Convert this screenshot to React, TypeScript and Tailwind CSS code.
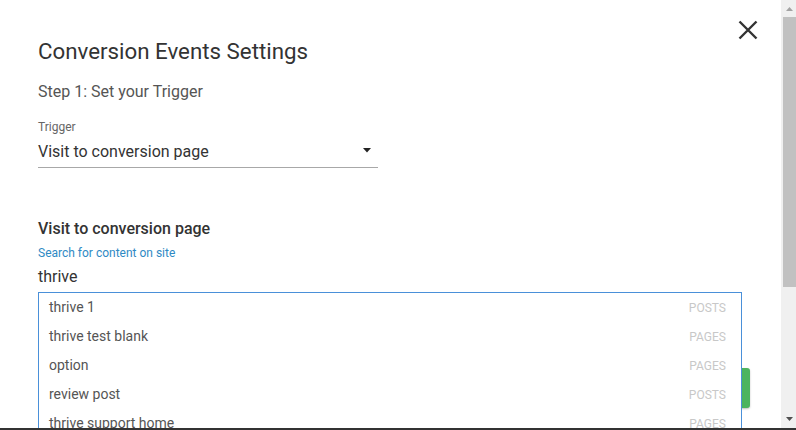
import React from "react";

const items: { name: string; type: string }[] = [
  { name: "thrive 1", type: "POSTS" },
  { name: "thrive test blank", type: "PAGES" },
  { name: "option", type: "PAGES" },
  { name: "review post", type: "POSTS" },
  { name: "thrive support home", type: "PAGES" },
];

export default function App() {
  return (
    <div
      className="w-[796px] h-[430px] overflow-hidden bg-white flex flex-col"
      style={{ fontFamily: "Roboto, 'Noto Sans', sans-serif" }}
    >
      <div className="flex flex-1 min-h-0">
        <div className="relative flex-1 min-w-0 overflow-hidden bg-white">
          <button className="absolute left-[738px] top-[20px] w-[20px] h-[20px] text-[#333]">
            <svg width="20" height="20" viewBox="0 0 20 20">
              <path d="M1.5 1.5 L18.5 18.5 M18.5 1.5 L1.5 18.5" stroke="#333" strokeWidth="2.4" />
            </svg>
          </button>
          <div className="absolute left-[741px] top-[368px] w-[9px] h-[40px] rounded-r-[3px] bg-[#4cb45f] shadow-[0_1px_2px_rgba(0,0,0,0.25)]" />
          <div className="relative px-[38px] pt-[38px]">
            <div className="text-[22.3px] leading-[26px] text-[#333]">Conversion Events Settings</div>
            <div className="mt-[18px] text-[16px] leading-[20px] text-[#555]">Step 1: Set your Trigger</div>
            <div className="mt-[17px] text-[12px] leading-[16px] text-[#666]">Trigger</div>
            <div className="mt-[7px] w-[340px] flex items-center justify-between pb-[5px] border-b border-[#a8a8a8]">
              <span className="text-[16px] leading-[20px] text-[#333]">Visit to conversion page</span>
              <svg width="8" height="5" viewBox="0 0 8 5" className="mr-[7px] mt-[-3px]">
                <path d="M0 0 L8 0 L4 4.5 Z" fill="#222" />
              </svg>
            </div>
            <div className="mt-[51px] text-[16px] leading-[20px] font-medium text-[#333]">Visit to conversion page</div>
            <div className="mt-[6px] text-[12px] leading-[16px] text-[#2f8ac4]">Search for content on site</div>
            <div className="mt-[6px] text-[16px] leading-[20px] text-[#333]">thrive</div>
            <div className="mt-[5px] w-[704px] border border-[#4a90d9] bg-white">
              {items.map((it) => (
                <div key={it.name} className="h-[29px] flex items-center justify-between pl-[10px] pr-[15px]">
                  <span className="text-[14px] text-[#555]">{it.name}</span>
                  <span className="text-[12px] text-[#c8c8c8]">{it.type}</span>
                </div>
              ))}
            </div>
          </div>
        </div>
        <div className="w-[15px] bg-[#f0f0f0] flex flex-col">
          <div className="h-[17px] flex items-center justify-center pl-[2px]">
            <svg width="7" height="4" viewBox="0 0 7 4">
              <path d="M0 4 L7 4 L3.5 0 Z" fill="#a3a3a3" />
            </svg>
          </div>
          <div className="ml-[2px] h-[270px] bg-[#c1c1c1]" />
          <div className="flex-1" />
          <div className="h-[17px] flex items-center justify-center pl-[2px] pb-[2px]">
            <svg width="7" height="4" viewBox="0 0 7 4">
              <path d="M0 0 L7 0 L3.5 4 Z" fill="#505050" />
            </svg>
          </div>
        </div>
      </div>
      <div className="h-[2px] bg-[#333]" />
    </div>
  );
}
